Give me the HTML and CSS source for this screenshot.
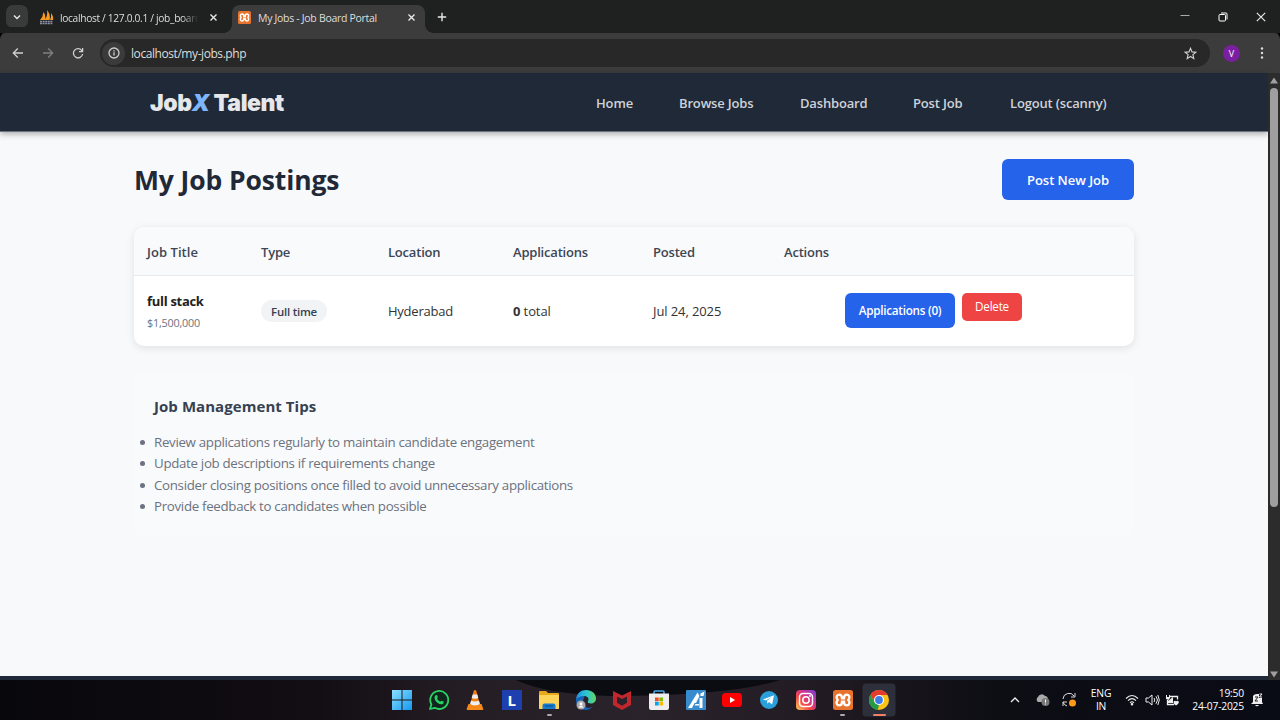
FILE: index.html
```html
<!DOCTYPE html>
<html lang="en">
<head>
<meta charset="utf-8">
<title>My Jobs - Job Board Portal</title>
<link rel="stylesheet" href="styles.css">
</head>
<body>
<div class="tabstrip">
  <div class="tab-search"><svg width="10" height="10" viewBox="0 0 10 10"><path d="M2 3.500l3 3 3-3" class="stroke bright"/></svg></div>
  <div class="tab tab-idle">
    <svg width="15" height="15" viewBox="0 0 15 15"><path d="M1 10Q4 7 4.500 2Q7 5 6 10zM5.500 10Q9 6 8 0Q12 5 10.500 10zM11 10Q12.500 7 12 3Q15 7 14 10z" fill="#f59b22"/><path d="M1 11.500h13M1 13.500h13" stroke="#8d8fa8" stroke-width="1.600" stroke-dasharray="2 .6"/></svg>
    <span class="tab-title fade">localhost / 127.0.0.1 / job_board</span>
    <svg class="tab-close" width="9" height="9" viewBox="0 0 9 9"><path d="M1.500 1.500l6 6M7.500 1.500l-6 6" class="stroke bright"/></svg>
  </div>
  <div class="tab tab-active">
    <svg width="13" height="13" viewBox="0 0 20 20"><use href="#xampp"/></svg>
    <span class="tab-title">My Jobs - Job Board Portal</span>
    <svg class="tab-close" width="9" height="9" viewBox="0 0 9 9"><path d="M1.500 1.500l6 6M7.500 1.500l-6 6" class="stroke bright"/></svg>
  </div>
  <svg class="new-tab" width="10" height="10" viewBox="0 0 10 10"><path d="M5 .8v8.400M.8 5h8.400" class="stroke bright"/></svg>
  <div class="window-controls">
    <svg width="10" height="10" viewBox="0 0 10 10"><path d="M.5 3.500h9" stroke="#aaa"/></svg>
    <svg width="10" height="10" viewBox="0 0 10 10" fill="none" stroke="#fff"><rect x="1" y="2.500" width="6.500" height="6.500" rx="1"/><path d="M3 1h5q1 0 1 1v5.500"/></svg>
    <svg width="10" height="10" viewBox="0 0 10 10"><path d="M.8.8l8.400 8.400M9.200.8L.8 9.200" stroke="#eee" stroke-width="1.100"/></svg>
  </div>
</div>
<div class="toolbar">
  <svg class="nav-icon" width="12" height="12" viewBox="0 0 12 12"><path d="M11 6H1.500M5.800 1.500L1.300 6l4.500 4.500" class="stroke"/></svg>
  <svg class="nav-icon dim" width="12" height="12" viewBox="0 0 12 12"><path d="M1 6h9.500M6.200 1.500L10.700 6l-4.500 4.500" class="stroke"/></svg>
  <svg class="nav-icon" width="12" height="12" viewBox="0 0 12 12"><path d="M10 3.800A4.600 4.600 0 1 0 10.600 7M10.600 1v3.600H7" class="stroke"/></svg>
  <div class="omnibox">
    <span class="site-info"><svg width="12" height="12" viewBox="0 0 12 12"><circle cx="6" cy="6" r="5" class="stroke"/><path d="M6 5.300v3.200M6 3.200v1.200" class="stroke"/></svg></span>
    <span class="url">localhost/my-jobs.php</span>
    <svg class="star" width="13" height="13" viewBox="0 0 13 13"><path d="M6.500 1.300L8 4.900l3.900.3-3 2.500.9 3.900-3.300-2.100-3.300 2.100.9-3.900-3-2.500L5 4.900z" fill="none" stroke="#d5d5d5" stroke-width="1.100"/></svg>
  </div>
  <span class="avatar">V</span>
  <svg class="menu-dots" width="4" height="12" viewBox="0 0 4 12" fill="#ddd"><circle cx="2" cy="1.500" r="1.200"/><circle cx="2" cy="6" r="1.200"/><circle cx="2" cy="10.500" r="1.200"/></svg>
</div>
<div class="viewport">
  <div class="page">
    <header class="site-header">
      <div class="logo">Job<em>X</em> Talent</div>
      <nav class="site-nav"><a>Home</a><a>Browse Jobs</a><a>Dashboard</a><a>Post Job</a><a>Logout (scanny)</a></nav>
    </header>
    <main class="content">
      <div class="heading-row"><h1>My Job Postings</h1><a class="btn-post">Post New Job</a></div>
      <section class="jobs">
        <div class="row head"><span class="th-title">Job Title</span><span>Type</span><span>Location</span><span>Applications</span><span>Posted</span><span>Actions</span></div>
        <div class="row job">
          <div><div class="job-title">full stack</div><div class="salary">$1,500,000</div></div>
          <div><span class="pill">Full time</span></div>
          <div>Hyderabad</div>
          <div class="cell-total"><b>0</b> total</div>
          <div class="cell-date">Jul 24, 2025</div>
          <div class="actions"><a class="btn-apps">Applications (0)</a><a class="btn-delete">Delete</a></div>
        </div>
      </section>
      <section class="tips">
        <h3>Job Management Tips</h3>
        <ul>
          <li>Review applications regularly to maintain candidate engagement</li>
          <li>Update job descriptions if requirements change</li>
          <li>Consider closing positions once filled to avoid unnecessary applications</li>
          <li>Provide feedback to candidates when possible</li>
        </ul>
      </section>
    </main>
    <footer class="site-footer"></footer>
  </div>
  <div class="scrollbar"><svg width="10" height="7" viewBox="0 0 10 7"><path d="M5 .5L9 6.500H1z" fill="#9f9f9f"/></svg><i class="thumb"></i><svg class="down" width="10" height="7" viewBox="0 0 10 7"><path d="M5 6.500L9 .5H1z" fill="#9f9f9f"/></svg></div>
</div>
<div class="taskbar">
  <svg class="wallpaper" width="1280" height="40" viewBox="0 0 1280 40"><defs><linearGradient id="base"><stop offset="0" stop-color="#08070b"/><stop offset=".25" stop-color="#120e13"/><stop offset=".36" stop-color="#251d24"/><stop offset=".5" stop-color="#2b232b"/><stop offset=".62" stop-color="#241c24"/><stop offset=".78" stop-color="#0d0d14"/><stop offset="1" stop-color="#0a0c15"/></linearGradient></defs><rect width="1280" height="40" fill="url(#base)"/><path d="M516 0Q545 14 610 16Q730 16 780 0z" fill="#0b0b12"/></svg>
  <div class="apps">
    <svg viewBox="0 0 20 20"><defs><linearGradient id="win" x2="1" y2="1"><stop stop-color="#8be0ff"/><stop offset="1" stop-color="#1598ef"/></linearGradient></defs><path d="M0 0h9.500v9.500H0zM10.500 0H20v9.500h-9.500zM0 10.500h9.500V20H0zM10.500 10.500H20V20h-9.500z" fill="url(#win)"/></svg>
    <svg viewBox="0 0 20 20"><path d="M1 19l1.400-4.600A9 9 0 1 1 5.800 17.800z" fill="#10251b" stroke="#28d366" stroke-width="1.800" stroke-linejoin="round"/><path d="M6.600 5.300c.6-.6 1.300-.4 1.600.3l.6 1.500c.1.600-.7 1.100-.7 1.500.5 1.300 1.700 2.400 3 3 .5.100 1-1 1.600-.8l1.700.8c.6.400.3 1.300-.1 1.800-2.300 2.200-6-.2-7.600-2.500-1.300-1.800-1.800-4-.1-5.600z" fill="#28d366"/></svg>
    <svg viewBox="0 0 20 20"><path d="M3.500 14h13l1.800 5q.2 1-.8 1h-15q-1 0-.8-1z" fill="#f58a1b"/><path d="M8.800.5q1.200-.8 2.400 0L15 15q-5 3-10 0z" fill="#f07d12"/><path d="M7.700 4.500h4.600l1 3.500q-3.300 1.500-6.600 0zM6 10.500q4 1.800 8 0l.9 3.500q-4.900 3-9.800 0z" fill="#eee"/></svg>
    <svg viewBox="0 0 20 20"><rect width="20" height="20" fill="#1e3fae"/><text x="5.500" y="15.500" class="letter-icon">L</text></svg>
    <svg viewBox="0 0 20 20"><path d="M0 2q0-1 1-1h6l2 2h10q1 0 1 1v14q0 1-1 1H1q-1 0-1-1z" fill="#e8a91c"/><path d="M0 5h20v13q0 1-1 1H1q-1 0-1-1z" fill="#ffd45b"/><path d="M3.500 19v-3.500q0-2 2-2h9q2 0 2 2V19z" fill="#147bd1"/><path d="M6 16h8" stroke="#0b559a" stroke-width="1.300"/></svg>
    <svg viewBox="0 0 20 20"><defs><linearGradient id="edge" x2="1"><stop stop-color="#238ce0"/><stop offset=".5" stop-color="#2bc5d7"/><stop offset="1" stop-color="#62d65f"/></linearGradient></defs><path d="M0 9Q2 4 9 5l-2 6q0 5 5 7 3 0 5-2-3 4-7 4A10 10 0 0 1 0 9z" fill="#1763b5"/><path d="M0 9C1 3 5 0 10 0c6 0 10 4 10 8.500 0 3.500-2.500 5-5 5-3 0-4-1-3-2.500 1.500-2.500-.5-5-4-5C4 6 1 8 0 9z" fill="url(#edge)"/><circle cx="5" cy="15" r="4.500" fill="#aaa"/><circle cx="5" cy="13.700" r="1.500" fill="#fff"/><path d="M2.500 17.500q2.500-4 5 0z" fill="#fff"/></svg>
    <svg viewBox="0 0 20 20"><path d="M1 1l9 4.500L19 1v14l-9 5-9-5zM5 6.500v6.300l5 2.900 5-2.900V6.500l-5 2.600z" fill="#c1272d" fill-rule="evenodd"/></svg>
    <svg viewBox="0 0 20 20"><path d="M5 5V2q0-1 1-1h8q1 0 1 1v3" fill="none" stroke="#43aaf0" stroke-width="1.500"/><path d="M0 3.500h20V18q0 2-2 2H2q-2 0-2-2z" fill="#eee"/><path d="M6 7.500h3.700v3.700H6z" fill="#f25022"/><path d="M10.300 7.500H14v3.700h-3.700z" fill="#7fba00"/><path d="M6 11.800h3.700v3.700H6z" fill="#00a4ef"/><path d="M10.300 11.800H14v3.700h-3.700z" fill="#ffb900"/></svg>
    <svg viewBox="0 0 20 20"><rect width="20" height="20" rx="1" fill="#378bcf"/><path d="M2 18L11.500 2.500 13.500 6 10 13H8.500L6 18zM13.500 8h3v10h-3zM14.500 3.500l4-2-1 4.500h-3zM9.500 14H13v1.500H8.500z" fill="#fff"/></svg>
    <svg viewBox="0 0 20 20"><rect y="3" width="20" height="14" rx="3.500" fill="#f00"/><path d="M8 7l5.200 3L8 13z" fill="#fff"/></svg>
    <svg viewBox="0 0 20 20"><circle cx="10" cy="10" r="9" fill="#2a9fda"/><path d="M3.800 9.600L15 5.200l-1.900 9.200-3.100-2.300-1.600 1.600-.3-2.900 4.700-4-5.800 3.600z" fill="#fff"/></svg>
    <svg viewBox="0 0 20 20"><defs><linearGradient id="ig" x1="0" y1="1" x2="1" y2="0"><stop stop-color="#ffd15a"/><stop offset=".35" stop-color="#f34a45"/><stop offset=".65" stop-color="#cf2f98"/><stop offset="1" stop-color="#7044d7"/></linearGradient></defs><rect width="20" height="20" rx="4" fill="url(#ig)"/><rect x="3.500" y="3.500" width="13" height="13" rx="3.500" fill="none" stroke="#fff" stroke-width="1.500"/><circle cx="10" cy="10" r="3.200" fill="none" stroke="#fff" stroke-width="1.500"/><circle cx="14" cy="6" r=".9" fill="#fff"/></svg>
    <svg viewBox="0 0 20 20"><g id="xampp"><rect width="20" height="20" rx="2.500" fill="#e8732c"/><path d="M4.700 10C2.500 7.500 3.800 4.600 6.200 4.600S9 7 9 8.300h2c0-1.300.4-3.700 2.800-3.700s3.700 2.900 1.500 5.400c2.200 2.500.9 5.400-1.500 5.400S11 13 11 11.700H9c0 1.300-.4 3.700-2.800 3.700S2.500 12.500 4.700 10z" fill="none" stroke="#fff" stroke-width="2.300"/></g></svg>
    <svg class="current" viewBox="0 0 20 20"><circle cx="10" cy="10" r="10" fill="#fbc116"/><path d="M1.340 5A10 10 0 0 1 18.660 5H10L5.670 12.500z" fill="#e33b2e"/><path d="M1.340 5L5.670 12.500 10 15 8.700 20A10 10 0 0 1 1.340 5z" fill="#249b4b"/><circle cx="10" cy="10" r="5" fill="#fff"/><circle cx="10" cy="10" r="3.900" fill="#3c7de8"/></svg>
  </div>
  <div class="indicators"><i></i><i></i><i class="on"></i></div>
  <div class="tray">
    <svg class="tray-up" width="10" height="6" viewBox="0 0 10 6"><path d="M1 5l4-4 4 4" fill="none" stroke="#eee" stroke-width="1.300"/></svg>
    <svg class="tray-cloud" width="15" height="14" viewBox="0 0 15 14"><path d="M3 9a3 3 0 0 1 0-5 4 4 0 0 1 7-1q3 0 3 4v2z" fill="#aaa"/><circle cx="10.500" cy="9" r="4" fill="#777"/><path d="M10.500 6.500v3M10.500 10.500v1" stroke="#fff"/></svg>
    <svg class="tray-sync" width="15" height="15" viewBox="0 0 15 15"><path d="M1 6a6 6 0 0 1 11-3M13 0v4H9M5 13a6 6 0 0 1-4-4M1 13V9h4" fill="none" stroke="#ddd"/><circle cx="10.500" cy="10" r="3.500" fill="#fa9a18"/></svg>
    <div class="lang">ENG<br>IN</div>
    <svg class="tray-wifi" width="14" height="12" viewBox="0 0 14 12" fill="none" stroke="#eee" stroke-width="1.100"><path d="M1 4.500q6-6 12 0M3 6.700q4-4 8 0M5 8.800q2-2 4 0"/><circle cx="7" cy="10.300" r=".7" fill="#eee"/></svg>
    <svg class="tray-vol" width="15" height="12" viewBox="0 0 15 12" fill="none" stroke="#eee"><path d="M1 4h2.500L7 1v10L3.500 8H1zM9 4q1.500 2 0 4M11 2.300q3 3.700 0 7.400M12.800 1q3 5 0 10"/></svg>
    <svg class="tray-power" width="15" height="12" viewBox="0 0 15 12"><path d="M4 2.500h8.500v3M2.500 6v4.500H9" fill="none" stroke="#eee" stroke-width="1.300"/><path d="M3 7l5-4v6H3zM1 1h1v2h2V1h1v3L3.500 6 1 5zM8.500 7.500q2-1.500 2.500 0 .8-1.500 2.800 0 .5 2-2.800 4-3-2-2.500-4z" fill="#eee"/></svg>
    <div class="clock">19:50<br>24-07-2025</div>
    <svg width="12" height="14" viewBox="0 0 12 14"><path d="M2 3q1-2 4-2h2v4h3v4l1 2H0l2-2zM4 12h4q-2 2.500-4 0z" fill="#eee"/><path d="M4 4h3L4 8h3" fill="none" stroke="#222"/><path d="M8.500 1H11L8.500 4H11" fill="none" stroke="#eee"/></svg>
  </div>
</div>
</body>
</html>
```
FILE: styles.css
```css
* { box-sizing: border-box; }
body { margin: 0; width: 1280px; height: 720px; overflow: hidden; display: flex; flex-direction: column; font-family: "Open Sans", "Noto Sans", sans-serif; white-space: nowrap; background: #000; }
svg { display: block; flex: none; }
.stroke { fill: none; stroke: #cfcfcf; stroke-width: 1.300; }
.bright { stroke: #e8e8e8; stroke-width: 1.400; }

.tabstrip { height: 33px; flex: none; background: #1f2120; display: flex; align-items: center; padding-left: 6px; color: #dedede; font-size: 10.500px; }
.tab-search { width: 22px; height: 23px; border-radius: 7px; background: #393a3a; display: grid; place-items: center; }
.tab { display: flex; align-items: center; height: 28px; align-self: flex-end; padding-bottom: 3px; }
.tab-idle { width: 204px; padding-right: 14px; padding-left: 11px; gap: 6px; }
.tab-active { width: 193px; padding-right: 9px; padding-left: 6px; gap: 7px; background: #3c3c3c; border-radius: 8px 8px 0 0; position: relative; }
.tab-active::before, .tab-active::after { content: ""; position: absolute; bottom: 0; width: 8px; height: 8px; }
.tab-active::before { left: -8px; background: radial-gradient(circle at 0 0, transparent 7.500px, #3c3c3c 8px); }
.tab-active::after { right: -8px; background: radial-gradient(circle at 100% 0, transparent 7.500px, #3c3c3c 8px); }
.tab-title { letter-spacing: -.3px; }
.fade { width: 140px; mask-image: linear-gradient(90deg, #000 87%, transparent 99%); font-size: 10.200px; letter-spacing: -.32px; }
.tab-close { margin-left: auto; }
.new-tab { margin-left: 12px; }
.window-controls { margin-left: auto; display: flex; gap: 28px; padding-right: 14px; }

.toolbar { height: 40px; flex: none; background: #3c3c3c; display: flex; align-items: center; padding-left: 12px; border-radius: 6px 6px 0 0; box-shadow: 0 -8px 0 -2px #1f2120; }
.nav-icon { margin-right: 18px; }
.dim { opacity: .45; }
.omnibox { width: 1110px; height: 28px; margin-left: -2px; border-radius: 14px; background: #282828; display: flex; align-items: center; padding: 0 13px 0 2px; }
.site-info { width: 23px; height: 23px; border-radius: 50%; background: #3b3b3b; display: grid; place-items: center; }
.url { color: #dedede; font-size: 12px; letter-spacing: -.43px; margin-left: 6px; }
.star { margin-left: auto; }
.avatar { width: 17px; height: 17px; margin-left: 13px; border-radius: 50%; background: #7b1fa2; color: #fff; font-size: 9px; display: grid; place-items: center; }
.menu-dots { margin-left: 20px; }

.viewport { height: 607px; flex: none; display: flex; }
.page { width: 1268px; height: 607px; background: #f8f9fb; display: flex; flex-direction: column; }
.site-header { height: 59px; flex: none; background: #1f2937; box-shadow: 0 2px 6px rgba(0,0,0,.32); display: flex; justify-content: space-between; align-items: center; padding: 0 161px 0 150px; border-bottom: 1px solid #6d727d; }
.logo { font-family: Inter, "Open Sans", sans-serif; font-size: 23px; font-weight: 900; letter-spacing: -.4px; color: #e5e7eb; line-height: 30px; padding-top: 1px; }
.logo em { color: #7eb6fb; }
.site-nav { display: grid; grid-template-columns: 83px 121px 113px 97px 97px; color: #ced2d8; font-weight: 600; font-size: 13px; letter-spacing: -.16px; padding-top: 1px; }
.content { flex: 1; width: 1000px; margin-left: 134px; }
.heading-row { display: flex; justify-content: space-between; align-items: center; height: 41px; margin-top: 27px; }
h1 { margin: 0; font-size: 26.500px; font-weight: 700; letter-spacing: -.12px; color: #1f2937; line-height: 40px; padding-top: 1px; }
.btn-post { width: 132px; height: 41px; border-radius: 6px; background: #2563eb; color: #fff; font-weight: 600; font-size: 13px; letter-spacing: -.03px; display: grid; place-items: center; padding-top: 1px; }
.jobs { margin-top: 27px; height: 119px; border-radius: 10px; overflow: hidden; background: #fff; box-shadow: 0 2px 9px rgba(0,0,0,.1); }
.row { display: grid; grid-template-columns: 114px 127px 125px 140px 131px 1fr; align-items: center; padding-left: 13px; }
.head { height: 49px; background: #f9fafb; border-bottom: 1px solid #e8ebef; color: #3d4655; font-size: 13px; font-weight: 600; letter-spacing: -.2px; padding-top: 1px; }
.th-title { letter-spacing: .05px; }
.job { height: 70px; color: #333; font-size: 13px; letter-spacing: -.24px; }
.job-title { font-weight: 700; font-size: 13px; line-height: 20px; color: #222; letter-spacing: -.3px; padding-top: 1px; }
.salary { color: #6b7280; font-size: 10.800px; line-height: 20px; letter-spacing: -.2px; margin-top: 2px; }
.pill { display: inline-block; background: #f1f3f5; border-radius: 11px; width: 66px; height: 22px; line-height: 23px; text-align: center; color: #374151; font-size: 11.400px; font-weight: 600; letter-spacing: -.2px; }
.cell-total, .cell-date { letter-spacing: -.1px; }
.actions { display: flex; gap: 7px; align-items: flex-start; padding-left: 61px; padding-bottom: 2px; font-weight: 600; color: #fff; font-size: 11.700px; letter-spacing: -.25px; }
.btn-apps { width: 110px; height: 35px; border-radius: 6px; background: #2563eb; display: grid; place-items: center; padding-bottom: 1px; }
.btn-delete { width: 60px; height: 28px; border-radius: 5px; background: #ef4444; display: grid; place-items: center; font-weight: 500; padding-bottom: 1px; }
.tips { margin-top: 27px; height: 163px; background: #f9fafb; border-radius: 8px; padding: 20px; }
h3 { margin: 0; font-size: 15px; font-weight: 700; letter-spacing: .06px; line-height: 26px; color: #374151; }
ul { margin: 13px 0 0; padding: 0; list-style: none; color: #6b7280; font-size: 13.300px; letter-spacing: -.31px; line-height: 21.330px; }
li::before { content: ""; float: left; width: 5px; height: 5px; border-radius: 50%; background: #6b7280; margin: 8px 0 0 -14px; }
.site-footer { height: 4px; flex: none; background: #1f2937; }
.scrollbar { width: 12px; background: #2c2c2c; display: flex; flex-direction: column; align-items: center; padding: 4px 0 2px; }
.thumb { width: 8px; height: 419px; margin-top: 4px; border-radius: 4px; background: #9f9f9f; }
.down { margin-top: auto; }

.taskbar { height: 40px; flex: none; position: relative; }
.wallpaper { position: absolute; inset: 0; }
.apps { position: relative; height: 40px; padding-left: 383.500px; display: grid; grid-template-columns: repeat(14, 36.740px); align-items: center; justify-items: center; }
.apps svg { width: 20px; height: 20px; overflow: visible; }
.apps .current { background: #2d303b; box-shadow: 0 0 0 6.500px #2d303b; border-radius: 1px; }
.letter-icon { font: 700 15px "Open Sans", sans-serif; fill: #fff; }
.indicators { position: absolute; left: 547px; bottom: 4px; display: flex; align-items: flex-end; }
.indicators i { width: 5px; height: 2px; border-radius: 1px; background: #aaa; }
.indicators i:nth-child(2) { margin-left: 288px; }
.indicators .on { width: 13px; margin-left: 28px; background: #f28065; }
.tray { position: absolute; left: 1010px; top: 0; height: 40px; width: 256px; display: flex; align-items: center; color: #fff; font-size: 10.300px; line-height: 13px; letter-spacing: -.2px; }
.tray-cloud { margin-left: 15px; }
.tray-sync { margin-left: 12px; }
.lang { text-align: center; width: 22px; margin-left: 13px; }
.tray-wifi { margin-left: 13px; }
.tray-vol { margin-left: 6px; }
.tray-power { margin-left: 5px; }
.clock { text-align: right; width: 52px; margin: 0 7px 0 12px; }
```
